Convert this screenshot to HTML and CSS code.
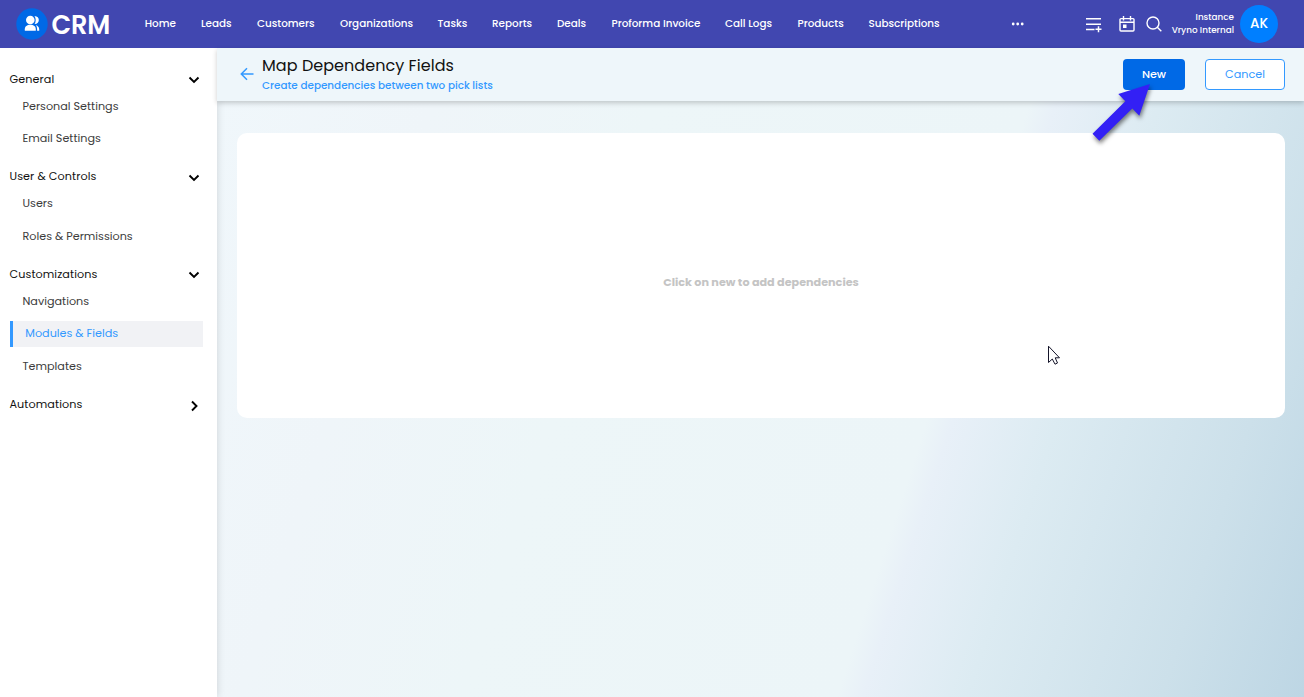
FILE: index.html
```html
<!DOCTYPE html>
<html lang="en">
<head>
<meta charset="utf-8">
<title>Map Dependency Fields</title>
<link rel="stylesheet" href="styles.css">
</head>
<body>
<header class="topbar">
  <div class="brand">
    <svg class="brand-mark" viewBox="0 0 32 32"><circle cx="16" cy="16" r="15.7" fill="#0069e6"/><g fill="#fff"><circle cx="14.3" cy="12" r="4.3"/><path d="M8.800 22.700v-1.500c0-2.800 2.200-4.500 5.500-4.500s5.500 1.700 5.500 4.500v1.500z"/><path d="M18.500 7.900c3 .2 4.300 2 4.300 4.100s-1.300 3.900-4.200 4.100c1.500-2.500 1.500-5.800-.1-8.200zM19.800 17c2.100.9 3.400 2.300 3.400 4.200v1.500h-2.100v-1.500c0-1.700-.4-3-1.300-4.200z"/></g></svg>
    <span class="brand-name">CRM</span>
  </div>
  <nav class="menu">
    <a>Home</a><a>Leads</a><a>Customers</a><a>Organizations</a><a>Tasks</a><a>Reports</a><a>Deals</a><a>Proforma Invoice</a><a>Call Logs</a><a>Products</a><a>Subscriptions</a>
  </nav>
  <svg class="more" viewBox="0 0 14 4" fill="#fff"><circle cx="2.200" cy="2" r="1.400"/><circle cx="6.700" cy="2" r="1.400"/><circle cx="11.200" cy="2" r="1.400"/></svg>
  <div class="tools">
    <svg class="tool-list" viewBox="0 0 18 16" fill="none" stroke="#fff" stroke-width="1.500"><path d="M1 1.700h15M1 7.200h15M1 12.500h8.500M13.500 9.300v6M10.500 12.300h6"/></svg>
    <svg class="tool-calendar" viewBox="0 0 16 16" fill="none" stroke="#fff" stroke-width="1.400"><rect x="1" y="2.600" width="14" height="12.400" rx="1"/><path d="M4.500 0v4.500M11.500 0v4.500M1 6.300h14"/><path d="M4 8.500h3.500V12H4z" fill="#fff" stroke="none"/></svg>
    <svg class="tool-search" viewBox="0 0 16 16" fill="none" stroke="#fff" stroke-width="1.400"><circle cx="7" cy="7" r="6"/><path d="M11.300 11.300l4 4"/></svg>
  </div>
  <div class="instance"><span>Instance</span><span>Vryno Internal</span></div>
  <div class="avatar">AK</div>
</header>
<div class="body">
  <aside class="sidebar">
    <div class="group"><span>General</span><svg class="chev" viewBox="0 0 12 12"><path d="M1.500 3.500L6 8l4.500-4.500"/></svg></div>
    <a class="item">Personal Settings</a>
    <a class="item">Email Settings</a>
    <div class="group"><span>User &amp; Controls</span><svg class="chev" viewBox="0 0 12 12"><path d="M1.500 3.500L6 8l4.500-4.500"/></svg></div>
    <a class="item">Users</a>
    <a class="item">Roles &amp; Permissions</a>
    <div class="group"><span>Customizations</span><svg class="chev" viewBox="0 0 12 12"><path d="M1.500 3.500L6 8l4.500-4.500"/></svg></div>
    <a class="item">Navigations</a>
    <a class="item active">Modules &amp; Fields</a>
    <a class="item">Templates</a>
    <div class="group"><span>Automations</span><svg class="chev" viewBox="0 0 12 12"><path d="M4 1.500L8.500 6 4 10.500"/></svg></div>
  </aside>
  <main class="main">
    <div class="pagehead">
      <svg class="back" viewBox="0 0 14 14" fill="none" stroke="#3399ff" stroke-width="1.500"><path d="M13.500 7H1.500M7 1.300L1.300 7 7 12.700"/></svg>
      <div class="titles"><h1>Map Dependency Fields</h1><p>Create dependencies between two pick lists</p></div>
      <button class="btn btn-new">New</button>
      <button class="btn btn-cancel">Cancel</button>
    </div>
    <section class="card"><p>Click on new to add dependencies</p></section>
  </main>
</div>
<svg class="callout" viewBox="0 0 70 70"><path d="M65 4L33.300 14 40.300 21.300 7.500 53.700 14.300 60.700 47.300 28.500 54.300 35.700z" fill="#3320f5"/></svg>
<svg class="pointer" viewBox="0 0 14 20"><path d="M1.500 1.200V17.500L5.300 14 8 19.200 10.500 18 8.200 12.800H12.500z" fill="#fff" stroke="#15152a" stroke-width="1"/></svg>
</body>
</html>
```
FILE: styles.css
```css
* { box-sizing: border-box; }
body { margin: 0; width: 1304px; height: 697px; overflow: hidden; font-family: Poppins, Inter, "Liberation Sans", sans-serif; font-size: 11.2px; color: #111; display: flex; flex-direction: column; }
svg { display: block; flex: none; }
h1, p { margin: 0; font-weight: 400; }
.topbar { height: 48px; flex: none; background: #4147b0; color: #fff; display: flex; align-items: center; }
.brand { width: 144.800px; padding-left: 15.500px; display: flex; align-items: center; gap: 4px; }
.brand-mark { width: 32px; height: 32px; }
.brand-name { font-size: 25.600px; font-weight: 600; line-height: 48px; padding-top: 2px; letter-spacing: -.1px; }
.menu { display: grid; grid-template-columns: 56.200px 56px 83px 97.500px 54.500px 65px 54.500px 113.500px 72.500px 71px 140.300px; font-weight: 500; font-size: 10.400px; white-space: nowrap; line-height: 48px; height: 48px; }
.more { width: 14px; height: 4px; margin-left: 2.500px; }
.tools { display: flex; align-items: center; margin-left: 59.700px; }
.tool-list { width: 18px; height: 16px; margin-top: 2px; }
.tool-calendar { width: 16px; height: 16px; margin: -1px 0 0 16px; }
.tool-search { width: 16px; height: 16px; margin-left: 11px; }
.instance { width: 72px; display: flex; flex-direction: column; align-items: flex-end; font-size: 8.800px; font-weight: 500; line-height: 13px; white-space: nowrap; }
.avatar { width: 38px; height: 38px; margin-left: 6px; border-radius: 50%; background: #007fff; display: flex; align-items: center; justify-content: center; font-size: 13.600px; font-weight: 500; }
.body { flex: 1; display: flex; }
.sidebar { width: 217px; flex: none; padding: 18.040px 14px 0 10px; background: #fff; box-shadow: 0 0 8px rgba(0,0,0,.15); z-index: 1; clip-path: inset(0 -10px 0 0); }
.group { height: 26px; margin: 0 0 1.500px -.5px; display: flex; align-items: center; justify-content: space-between; font-size: 11.200px; letter-spacing: .08px; white-space: nowrap; }
.item + .group { margin-top: 11.600px; }
.item { display: block; height: 26px; margin-bottom: 6.500px; line-height: 25.200px; padding-left: 12.500px; color: #3c3c3c; font-size: 11.200px; white-space: nowrap; }
.item.active { background: #f1f2f5; border-left: 3px solid #3399ff; color: #3399ff; padding-left: 12.300px; }
.chev { width: 12px; height: 12px; margin: 2.500px 3.400px 0 0; fill: none; stroke: #000; stroke-width: 1.900; }
.main { flex: 1; background: linear-gradient(108deg, #f0f7fb 0%, #eff5f9 18%, #edf6f8 35%, #ecf5f8 64%, #e8f0f8 66%, #dcebf2 74%, #cce0ea 89%, #bdd6e4 100%); }
.pagehead { height: 53px; background: #eef6fa; box-shadow: 0 2px 5px rgba(0,0,0,.2); display: flex; align-items: center; padding: 0 19px 0 22.500px; z-index: 2; position: relative; }
.back { width: 14px; height: 14px; margin-top: -.5px; }
.titles { margin-left: 8.500px; flex: 1; white-space: nowrap; }
.titles h1 { font-size: 16px; letter-spacing: .05px; line-height: 21px; color: #111; }
.titles p { font-size: 10.400px; line-height: 19px; font-weight: 500; color: #3399ff; }
.btn { height: 31px; border-radius: 4px; font: 500 11.200px Poppins, Inter, sans-serif; padding: 0; }
.btn-new { width: 62px; background: #0069e6; border: 0; color: #fff; }
.btn-cancel { width: 80px; margin-left: 20px; background: #fff; border: 1px solid #3399ff; color: #3399ff; font-weight: 400; }
.card { margin: 32px 19px 0 20px; height: 285px; border-radius: 10px; background: #fff; display: flex; align-items: center; justify-content: center; padding-top: 14px; }
.card p { font-size: 11.200px; font-weight: 700; color: #c4c4c4; }
.callout { position: absolute; left: 1085px; top: 80px; width: 70px; height: 70px; z-index: 5; filter: drop-shadow(1px 3px 2px rgba(0,0,0,.5)); }
.pointer { position: absolute; left: 1047px; top: 345px; width: 14px; height: 20px; }
```
